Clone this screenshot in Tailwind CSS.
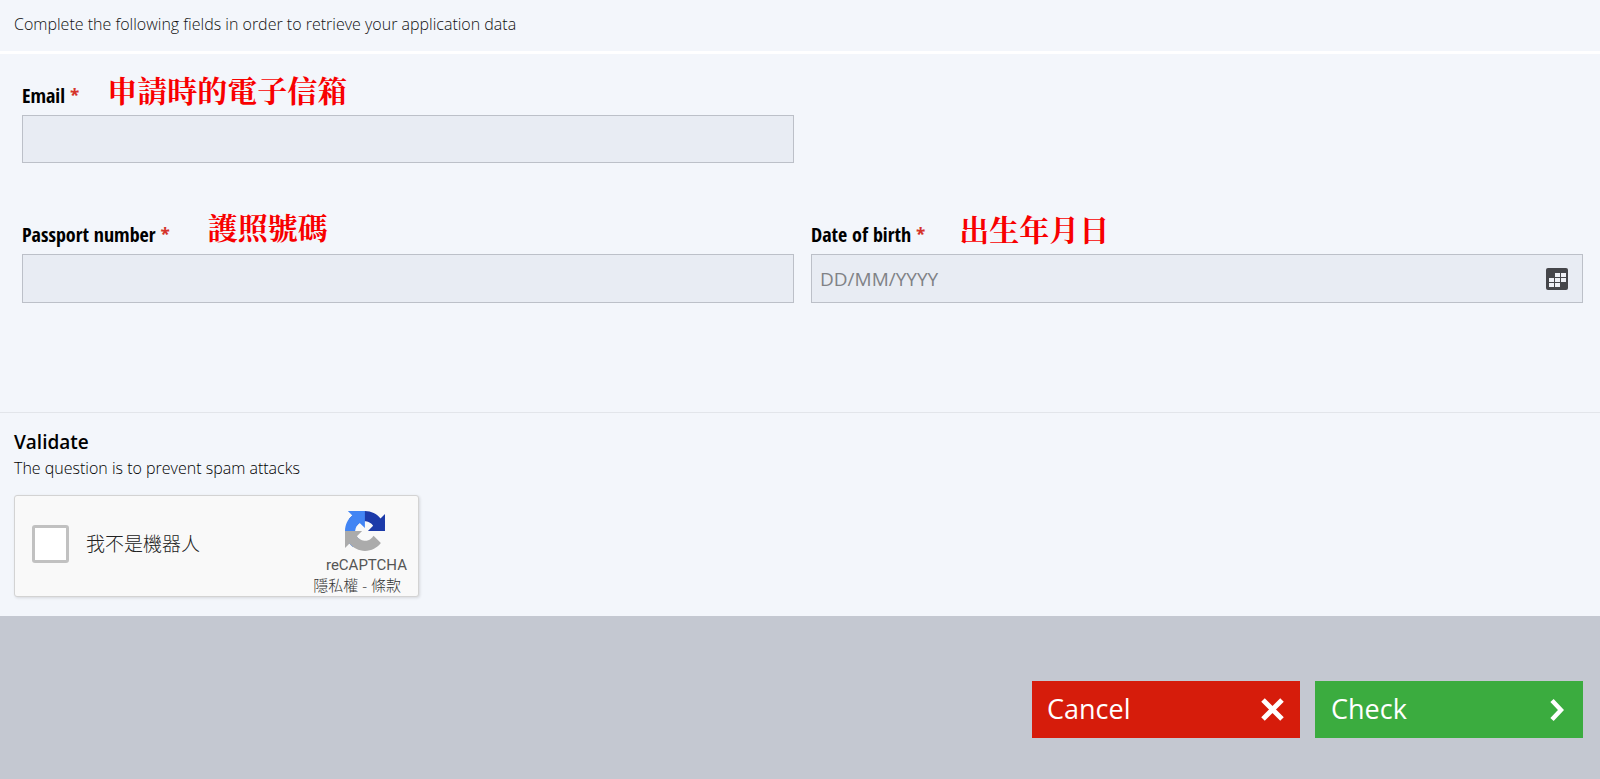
<!DOCTYPE html>
<html lang="en">
<head>
    <meta charset="UTF-8">
    <meta name="viewport" content="width=device-width, initial-scale=1.0">
    <title>Retrieve application</title>
    <script src="https://cdn.jsdelivr.net/npm/@tailwindcss/browser@4"></script>
</head>
<body class="min-h-screen flex flex-col bg-[#f3f6fb] text-[#111] font-['Open_Sans','Noto_Sans_CJK_TC',sans-serif]">
    <!-- Intro -->
    <header class="border-b-3 border-white px-3.5 pt-3 pb-[15px]">
        <p class="text-base leading-6 font-light text-[#111]">Complete the following fields in order to retrieve your application data</p>
    </header>

    <form class="flex-1 flex flex-col">
        <!-- Application fields -->
        <section class="grid grid-cols-2 gap-x-[17px] gap-y-[43px] pl-[22px] pr-[17px] pt-[18px] pb-[109px] border-b border-[#e2e5ea]">
            <div>
                <div class="flex items-end h-[43px] gap-7">
                    <label for="email" class="pb-[3px] text-xl leading-8 font-bold text-black font-['Open_Sans_Condensed','Open_Sans',sans-serif]">Email <span class="text-[#d5342b] font-normal">*</span></label>
                    <span lang="zh-Hant" class="pb-2 text-[30px] leading-9 font-bold text-[#f80000] font-['Noto_Serif_CJK_TC','Noto_Sans_CJK_TC',serif]">申請時的電子信箱</span>
                </div>
                <input id="email" type="email" class="block w-full h-12 px-2 text-[19px] bg-[#e8ecf3] border border-[#bcc0c8]">
            </div>
            <div></div>
            <div>
                <div class="flex items-end h-12 gap-[38px]">
                    <label for="passport" class="pb-[3px] text-xl leading-8 font-bold text-black font-['Open_Sans_Condensed','Open_Sans',sans-serif]">Passport number <span class="text-[#d5342b] font-normal">*</span></label>
                    <span lang="zh-Hant" class="pb-2.5 text-[30px] leading-9 font-bold text-[#f80000] font-['Noto_Serif_CJK_TC','Noto_Sans_CJK_TC',serif]">護照號碼</span>
                </div>
                <input id="passport" type="text" class="block w-full h-[49px] px-2 text-[19px] bg-[#e8ecf3] border border-[#bcc0c8]">
            </div>
            <div>
                <div class="flex items-end h-12 gap-[34px]">
                    <label for="birth" class="pb-[3px] text-xl leading-8 font-bold text-black font-['Open_Sans_Condensed','Open_Sans',sans-serif]">Date of birth <span class="text-[#d5342b] font-normal">*</span></label>
                    <span lang="zh-Hant" class="pb-2 text-[30px] leading-9 font-bold text-[#f80000] font-['Noto_Serif_CJK_TC','Noto_Sans_CJK_TC',serif]">出生年月日</span>
                </div>
                <div class="flex items-center h-[49px] pr-3.5 bg-[#e8ecf3] border border-[#bcc0c8]">
                    <input id="birth" type="text" placeholder="DD/MM/YYYY" class="flex-1 h-full px-2 text-[19px] bg-transparent placeholder:text-[#808286]">
                    <button type="button" aria-label="Open calendar">
                        <svg class="block w-[22px] h-[22px]" viewBox="0 0 22 22">
                            <rect width="22" height="22" rx="2" fill="#45464a"/>
                            <path fill="#eef0f5" d="M9 5h5v4H9zM15 5h5v4h-5zM3 10h5v4H3zM9 10h5v4H9zM15 10h5v4h-5zM3 15h5v4H3zM9 15h5v4H9z"/>
                        </svg>
                    </button>
                </div>
            </div>
        </section>

        <!-- Spam check -->
        <section class="px-3.5 pt-[15px] pb-[19px]">
            <h2 class="text-[19px] leading-7 font-semibold text-black">Validate</h2>
            <p class="text-base leading-6 font-light text-black">The question is to prevent spam attacks</p>
            <div class="mt-[15px] w-[405px] h-[102px] flex justify-between pl-[17px] pr-2.5 bg-[#f9f9f9] border border-[#d3d3d3] rounded-[3px] shadow-[1px_1px_3px_rgba(0,0,0,0.12)]">
                <label class="flex items-center gap-[17px] pb-1 text-[19px] font-light text-[#222]" lang="zh-Hant">
                    <input type="checkbox" class="appearance-none w-[37px] h-[38px] bg-white border-3 border-[#c1c1c1] rounded-[3px]">
                    我不是機器人
                </label>
                <div class="flex flex-col items-end pt-[15px]">
                    <svg class="w-10 h-10 mr-[23px]" viewBox="0 0 64 64">
                        <path fill="#1c3aa9" d="M64 31.955l-.033-1.37V4.687l-7.16 7.16C50.948 4.674 42.033.093 32.05.093c-10.4 0-19.622 4.96-25.458 12.64l11.736 11.86a15.55 15.55 0 0 1 4.754-5.334c2.05-1.6 4.952-2.906 8.968-2.906.485 0 .86.057 1.135.163 4.976.393 9.288 3.14 11.828 7.124l-8.307 8.307z"/>
                        <path fill="#4285f4" d="M31.862.094l-1.37.033H4.594l7.16 7.16C4.58 13.147 0 22.06 0 32.046c0 10.4 4.96 19.622 12.64 25.458L24.5 45.768a15.55 15.55 0 0 1-5.334-4.754c-1.6-2.05-2.906-4.952-2.906-8.968 0-.485.057-.86.163-1.135.393-4.976 3.14-9.288 7.124-11.828l8.307 8.307z"/>
                        <path fill="#ababab" d="M.001 32.045l.033 1.37v25.898l7.16-7.16c5.86 7.173 14.774 11.754 24.76 11.754 10.4 0 19.622-4.96 25.458-12.64l-11.736-11.86a15.55 15.55 0 0 1-4.754 5.334c-2.05 1.6-4.952 2.906-8.968 2.906-.485 0-.86-.057-1.135-.163-4.976-.393-9.288-3.14-11.828-7.124l8.307-8.307z"/>
                    </svg>
                    <span class="mt-1 mr-px text-[15px] leading-5 text-[#555] font-[Roboto,sans-serif]">reCAPTCHA</span>
                    <div class="mr-[7px] text-[15px] leading-5 font-light text-[#333]" lang="zh-Hant">
                        <a href="#">隱私權</a> - <a href="#">條款</a>
                    </div>
                </div>
            </div>
        </section>

        <!-- Actions -->
        <footer class="flex-1 flex items-start justify-end gap-[15px] pt-[65px] pb-10 pr-[17px] bg-[#c4c8d1] text-white text-[27px]">
            <button type="button" class="w-[268px] h-[57px] flex items-center justify-between pl-[15px] pr-4 bg-[#d61c0b]">
                Cancel
                <svg class="w-[23px] h-[23px]" viewBox="0 0 23 23" fill="none" stroke="currentColor" stroke-width="5">
                    <path d="M2 2l19 19M21 2L2 21"/>
                </svg>
            </button>
            <button type="submit" class="w-[268px] h-[57px] flex items-center justify-between pl-4 pr-[19px] bg-[#3bac3f]">
                Check
                <svg class="w-3.5 h-6" viewBox="0 0 14 24" fill="none" stroke="currentColor" stroke-width="4.500">
                    <path d="M2 2.500l9 9.500-9 9.500"/>
                </svg>
            </button>
        </footer>
    </form>
</body>
</html>
